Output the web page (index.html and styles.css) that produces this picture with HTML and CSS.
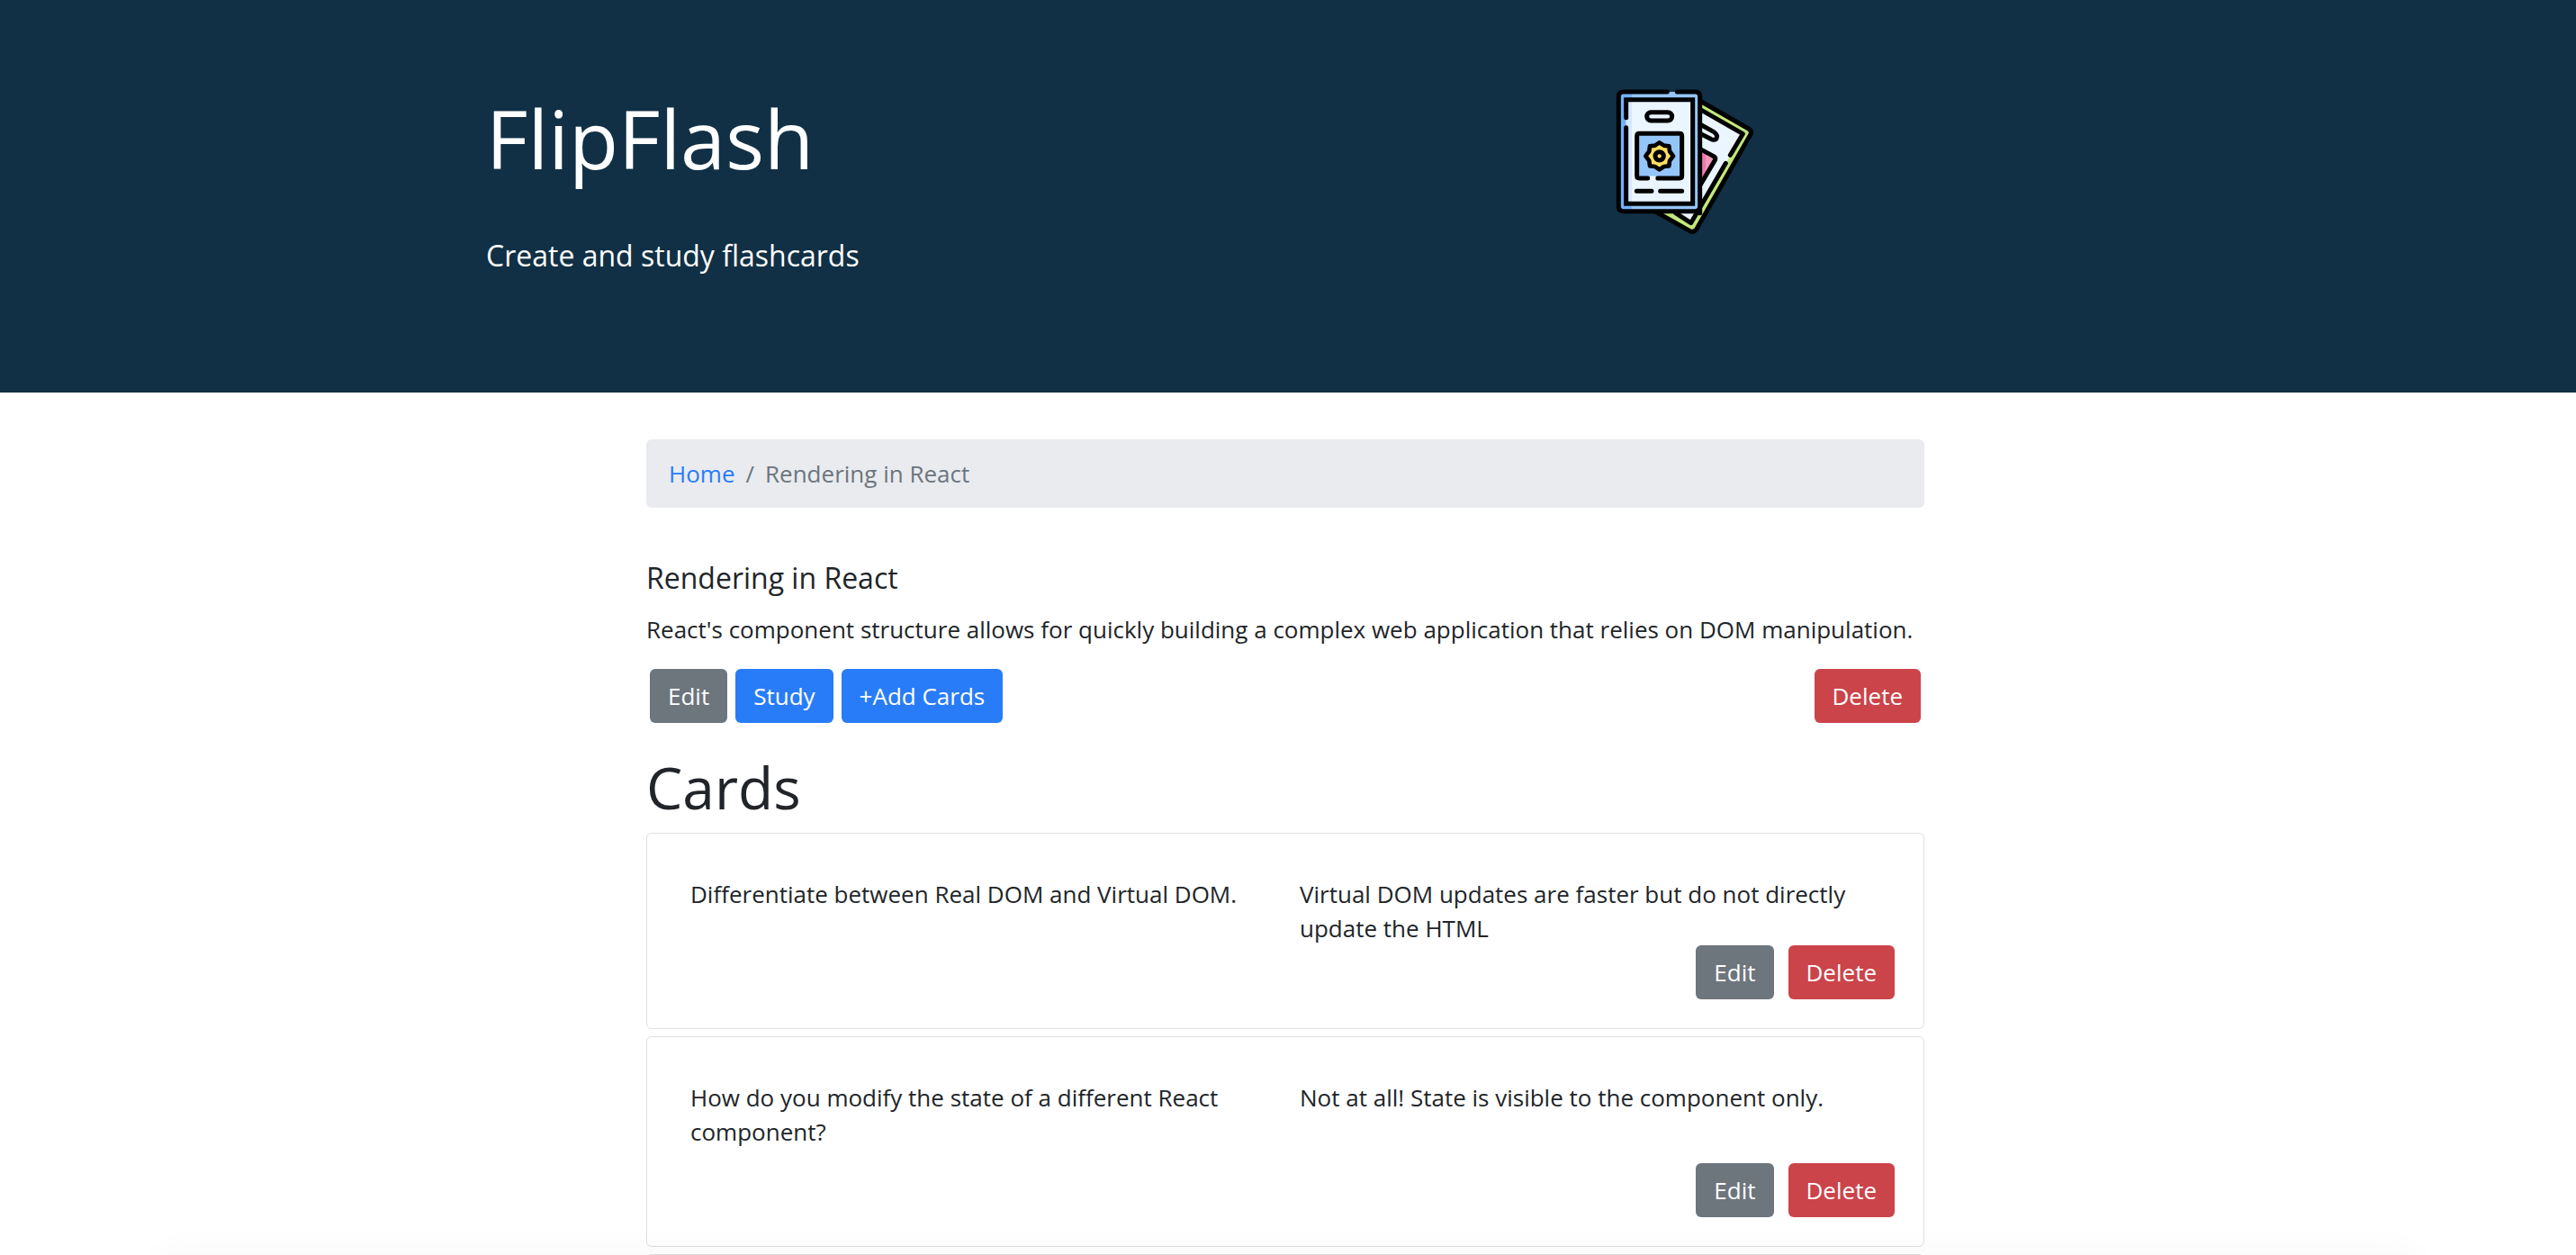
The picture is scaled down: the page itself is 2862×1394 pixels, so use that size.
FILE: index.html
```html
<!DOCTYPE html>
<html lang="en">
<head>
<meta charset="utf-8">
<meta name="viewport" content="width=device-width, initial-scale=1">
<title>FlipFlash</title>
<link rel="stylesheet" href="styles.css">
</head>
<body>
<header class="banner">
  <div class="banner-inner">
    <div class="banner-text">
      <h1 class="banner-title">FlipFlash</h1>
      <p class="banner-lead">Create and study flashcards</p>
    </div>
    <svg class="logo" viewBox="6 0 660 600" aria-hidden="true" fill="none" stroke-linecap="round" stroke-linejoin="round">
      <!-- back card -->
      <path d="M386 98L550 190Q560 197 554 208L374 526Q367 536 355 531L240 464Z" fill="#c4e87b"/>
      <path d="M386 126L529 206L356 503L300 464L386 440Z" fill="#ebf5ff"/>
      <path d="M386 260L438 290L390 375Z" fill="#f29abb"/>
      <path d="M386 256L405 267V345L390 375Z" fill="#ee7ba9"/>
      <g stroke="#000" stroke-width="15">
        <path d="M386 96L548 189Q561 197 554 209L375 523Q366 536 353 530L240 466"/>
        <path d="M386 124L529 206L487 277M472 304L356 503L305 470M386 440L386 470"/>
        <path d="M386 174L433 200Q447 210 441 222Q433 229 422 223L386 205M386 256L432 281Q440 286 436 294L386 379"/>
      </g>
      <!-- front card -->
      <rect x="115" y="66" width="271" height="398" rx="16" fill="#94c5f8"/>
      <path d="M131 66H159V464H131Q115 464 115 448V82Q115 66 131 66Z" fill="#72b0fa"/>
      <rect x="140" y="92" width="222" height="347" fill="#ebf5ff"/>
      <path d="M140 92H159V439H140Z" fill="#d5e8fd"/>
      <rect x="176" y="205" width="150" height="149" fill="#94c5f8"/>
      <g stroke="#000" stroke-width="15">
        <path d="M277 66H131Q115 66 115 82V448Q115 464 131 464H370Q386 464 386 448V82Q386 66 370 66H310"/>
        <path d="M140 152V92H362V439H140V185" stroke-linejoin="miter"/>
        <rect x="209" y="134" width="84" height="28" rx="14"/>
        <path d="M212 354H184Q176 354 176 346V213Q176 205 184 205H318Q326 205 326 213V346Q326 354 318 354H245"/>
        <path d="M175 397H225M254 397H326"/>
      </g>
      <path d="M219 354H238" stroke="#ebf5ff" stroke-width="15" stroke-linecap="butt"/>
      <path d="M251 235L266 245L283 247L285 264L297 280L285 296L283 313L266 315L251 325L236 315L219 313L217 296L205 280L217 264L219 247L236 245Z" fill="#ffdd5c" stroke="#000" stroke-width="14"/>
      <circle cx="251" cy="280" r="14" fill="#ffdd5c" stroke="#000" stroke-width="15"/>
    </svg>
  </div>
</header>

<main class="page">
  <nav aria-label="breadcrumb">
    <ol class="breadcrumb">
      <li><a href="#">Home</a></li>
      <li class="current" aria-current="page">Rendering in React</li>
    </ol>
  </nav>

  <section class="deck">
    <h2 class="deck-title">Rendering in React</h2>
    <p class="deck-text">React's component structure allows for quickly building a complex web application that relies on DOM manipulation.</p>
    <div class="deck-actions">
      <button class="btn secondary" type="button">Edit</button>
      <button class="btn primary" type="button">Study</button>
      <button class="btn primary" type="button">+Add Cards</button>
      <button class="btn danger push" type="button">Delete</button>
    </div>
  </section>

  <section>
    <h2 class="cards-title">Cards</h2>
    <div class="cards">
      <article class="card">
        <div class="sides">
          <p class="front">Differentiate between Real DOM and Virtual DOM.</p>
          <p class="back">Virtual DOM updates are faster but do not directly update the HTML</p>
        </div>
        <div class="card-actions">
          <button class="btn secondary" type="button">Edit</button>
          <button class="btn danger" type="button">Delete</button>
        </div>
      </article>
      <article class="card">
        <div class="sides">
          <p class="front">How do you modify the state of a different React component?</p>
          <p class="back">Not at all! State is visible to the component only.</p>
        </div>
        <div class="card-actions">
          <button class="btn secondary" type="button">Edit</button>
          <button class="btn danger" type="button">Delete</button>
        </div>
      </article>
      <article class="card"></article>
    </div>
  </section>
</main>
</body>
</html>
```
FILE: styles.css
```css
*, *::before, *::after { box-sizing: border-box; }

body {
  margin: 0;
  height: 100vh;
  overflow: hidden;
  background: #fff;
  color: #212529;
  font: 400 26px/38px "Open Sans", sans-serif;
}

h1, h2, p, ol { margin: 0; font-weight: 400; }

.banner {
  padding: 80px 6px 130px 0;
  background: #113045;
  color: #fff;
}

.banner-inner {
  display: grid;
  grid-template-columns: 1fr 1fr;
  max-width: 1776px;
  margin: 0 auto;
}

.banner-title {
  margin-bottom: 54px;
  padding-top: 18px;
  font-size: 90px;
  line-height: 110px;
}

.banner-lead { font-size: 32px; line-height: 44px; }

.logo {
  justify-self: center;
  width: 220px;
  height: 200px;
}

.page {
  width: 100%;
  max-width: 1426px;
  margin: 0 auto;
  padding: 52px 6px 0 0;
}

.breadcrumb {
  display: flex;
  margin-bottom: 56px;
  padding: 19px 25px;
  border-radius: 6px;
  background: #e9ebef;
  list-style: none;
}

.breadcrumb a { color: #297cf8; text-decoration: none; }
.current { color: #6d757d; }
.current::before { content: "/"; padding: 0 12px; }

.deck-title {
  margin-bottom: 16px;
  font-size: 32px;
  line-height: 44px;
}

.deck-text { margin-bottom: 25px; }

.deck-actions {
  display: flex;
  gap: 9px;
  margin-bottom: 34px;
  padding: 0 4px;
}

.btn {
  padding: 11px 20px;
  border: 0;
  border-radius: 6px;
  color: #fff;
  font: inherit;
}

.primary { background: #297cf8; }
.secondary { background: #6d757d; }
.danger { background: #cb444a; }
.push { margin-left: auto; }

.cards-title {
  margin-bottom: 12px;
  font-size: 64px;
  line-height: 76px;
}

.cards { display: grid; gap: 8px; }

.card {
  padding: 48px 32px 32px;
  border: 1px solid #dfdfdf;
  border-radius: 6px;
}

.sides {
  display: grid;
  grid-template-columns: 1fr 1fr;
}

.front, .back { padding: 0 16px; }
.front { margin-bottom: 16px; }

.card-actions {
  display: flex;
  justify-content: flex-end;
  gap: 16px;
}

/* soft shade along the bottom edge of the window */
body::after {
  content: "";
  position: fixed;
  inset: 100vh 180px auto;
  height: 40px;
  box-shadow: 0 0 40px rgba(0, 0, 0, .04);
}
```
